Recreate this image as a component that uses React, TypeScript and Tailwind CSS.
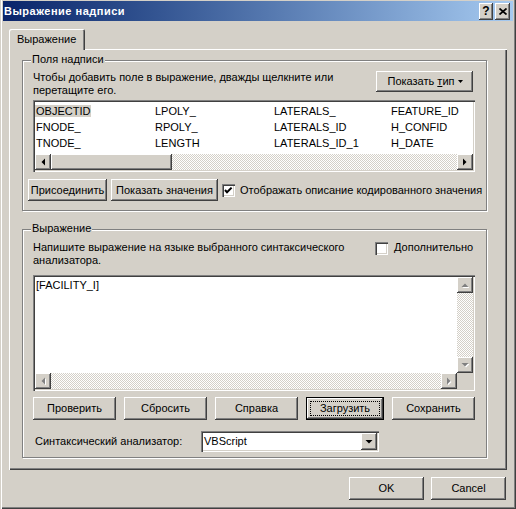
import React from 'react';

const RAISED =
  'bg-[#d4d0c8] shadow-[inset_-1px_-1px_#404040,inset_1px_1px_#fff,inset_-2px_-2px_#808080,inset_2px_2px_#d4d0c8]';
const SUNKEN =
  'shadow-[inset_1px_1px_#808080,inset_2px_2px_#404040,inset_-1px_-1px_#fff,inset_-2px_-2px_#d4d0c8]';
const DITHER =
  'bg-[image:repeating-conic-gradient(#fff_0_25%,#d4d0c8_0_50%)] bg-[length:2px_2px]';
const ETCHED = 'border border-[#808080] shadow-[inset_1px_1px_#fff,1px_1px_#fff]';

type Dir = 'l' | 'r' | 'u' | 'd';

const TRI: Record<Dir, string> = {
  l: '6,0.5 6,7.5 2.5,4',
  r: '2,0.5 2,7.5 5.5,4',
  u: '0.5,6 7.5,6 4,2.5',
  d: '0.5,2 7.5,2 4,5.5',
};

function Tri({ dir, off = false }: { dir: Dir; off?: boolean }) {
  return (
    <svg width="8" height="8" viewBox="0 0 8 8">
      {off && <polygon points={TRI[dir]} fill="#fff" transform="translate(1 1)" />}
      <polygon points={TRI[dir]} fill={off ? '#808080' : '#000'} />
    </svg>
  );
}

function ScrollBtn({ dir, off = false, className = 'w-[16px] h-[16px]' }: { dir: Dir; off?: boolean; className?: string }) {
  return (
    <div className={`${RAISED} shrink-0 flex items-center justify-center ${className}`}>
      <Tri dir={dir} off={off} />
    </div>
  );
}

function Btn({ children, className = '' }: { children: React.ReactNode; className?: string }) {
  return <div className={`${RAISED} shrink-0 flex items-center justify-center ${className}`}>{children}</div>;
}

function Check({ on = false }: { on?: boolean }) {
  return (
    <div className={`w-[13px] h-[13px] bg-white ${SUNKEN} shrink-0 flex items-center justify-center`}>
      {on && (
        <svg width="9" height="9" viewBox="0 0 9 9">
          <polyline points="1,4 3,6.2 7.6,1.6" stroke="#000" strokeWidth="2" fill="none" />
        </svg>
      )}
    </div>
  );
}

const fields = [
  ['OBJECTID', 'LPOLY_', 'LATERALS_', 'FEATURE_ID'],
  ['FNODE_', 'RPOLY_', 'LATERALS_ID', 'H_CONFID'],
  ['TNODE_', 'LENGTH', 'LATERALS_ID_1', 'H_DATE'],
];

export default function App() {
  return (
    <div className="w-[516px] h-[509px] bg-[#d4d0c8] font-['Liberation_Sans',Arial,sans-serif] text-[11px] leading-[13px] text-black pt-[1px] px-[3px] overflow-hidden select-none shadow-[inset_1px_0_#d4d0c8,inset_2px_0_#fff,inset_-1px_-1px_#404040,inset_-2px_-2px_#808080]">
      {/* title bar */}
      <div className="h-[20px] flex items-center bg-linear-to-r from-[#0a246a] to-[#a6caf0] pl-[1px] pr-[3px]">
        <span className="font-bold text-white tracking-[0.5px]">Выражение надписи</span>
        <div className="ml-auto flex gap-[2px]">
          <div className={`${RAISED} w-[14px] h-[17px] flex items-center justify-center font-bold text-[12px]`}>?</div>
          <div className={`${RAISED} w-[15px] h-[17px] flex items-center justify-center`}>
            <svg width="8" height="7" viewBox="0 0 8 7">
              <path d="M0.5 0.5 L7.5 6.5 M7.5 0.5 L0.5 6.5" stroke="#000" strokeWidth="1.7" />
            </svg>
          </div>
        </div>
      </div>

      <div className="pl-[6px] pt-[8px]">
        {/* tab */}
        <div className="relative z-10 w-[76px] h-[21px] -mb-px bg-[#d4d0c8] rounded-t-[2px] pl-[8px] pt-[4px] shadow-[inset_1px_1px_#fff,inset_-1px_0_#404040,inset_-2px_0_#808080]">
          Выражение
        </div>

        {/* tab panel */}
        <div className="w-[498px] h-[421px] pt-[11px] pl-[13px] shadow-[inset_1px_1px_#fff,inset_-1px_-1px_#404040,inset_-2px_-2px_#808080]">
          {/* fields group */}
          <div className={`relative w-[465px] h-[151px] ${ETCHED} pt-[10px] pl-[10px] pr-[11px]`}>
            <span className="absolute left-[8px] -top-[8px] px-px bg-[#d4d0c8]">Поля надписи</span>
            <div className="flex justify-between h-[26px]">
              <div className="whitespace-nowrap">
                Чтобы добавить поле в выражение, дважды щелкните или
                <br />
                перетащите его.
              </div>
              <Btn className="w-[97px] h-[21px] mr-[2px] gap-[4px] pl-[2px]">
                <span>
                  Показать <u>т</u>ип
                </span>
                <svg width="5" height="3" viewBox="0 0 5 3">
                  <polygon points="0,0 5,0 2.5,3" fill="#000" />
                </svg>
              </Btn>
            </div>

            <div className={`mt-[3px] h-[72px] bg-white ${SUNKEN} p-[2px] flex flex-col`}>
              <div className="flex-1 pt-px">
                {fields.map((row, i) => (
                  <div key={i} className="grid grid-cols-[119px_119px_117px_1fr] h-[16px] leading-[16px] whitespace-nowrap">
                    {row.map((f, j) => (
                      <span key={j}>
                        <span className={i === 0 && j === 0 ? 'bg-[#d4d0c8] px-px' : 'px-px'}>{f}</span>
                      </span>
                    ))}
                  </div>
                ))}
              </div>
              <div className="h-[16px] flex shrink-0">
                <ScrollBtn dir="l" />
                <div className={`w-[121px] ${RAISED}`} />
                <div className={`flex-1 ${DITHER}`} />
                <ScrollBtn dir="r" />
              </div>
            </div>

            <div className="flex items-center -ml-[5px] mt-[7px] h-[22px]">
              <Btn className="w-[79px] h-[22px]">Присоединить</Btn>
              <Btn className="w-[107px] h-[22px] ml-[4px]">Показать значения</Btn>
              <div className="ml-[4px]">
                <Check on />
              </div>
              <span className="ml-[5px] whitespace-nowrap shrink-0">Отображать описание кодированного значения</span>
            </div>
          </div>

          {/* expression group */}
          <div className={`relative mt-[18px] w-[465px] h-[229px] ${ETCHED} pt-[11px] pl-[10px] pr-[11px]`}>
            <span className="absolute left-[8px] -top-[8px] px-px bg-[#d4d0c8]">Выражение</span>
            <div className="flex h-[26px]">
              <div className="w-[342px] shrink-0 whitespace-nowrap">
                Напишите выражение на языке выбранного синтаксического
                <br />
                анализатора.
              </div>
              <div className="flex items-start pt-px gap-[6px]">
                <Check />
                <span className="whitespace-nowrap -mt-px">Дополнительно</span>
              </div>
            </div>

            <div className={`mt-[8px] h-[116px] bg-white ${SUNKEN} p-[2px] grid grid-cols-[1fr_16px] grid-rows-[1fr_16px]`}>
              <div className="pl-px pt-[2px]">[FACILITY_I]</div>
              <div className="flex flex-col">
                <ScrollBtn dir="u" off />
                <div className={`flex-1 ${DITHER}`} />
                <ScrollBtn dir="d" off />
              </div>
              <div className="flex">
                <ScrollBtn dir="l" off />
                <div className={`flex-1 ${DITHER}`} />
                <ScrollBtn dir="r" off />
              </div>
              <div className="bg-[#d4d0c8]" />
            </div>

            <div className="flex gap-[8px] mt-[6px]">
              <Btn className="w-[83px] h-[23px]">Проверить</Btn>
              <Btn className="w-[83px] h-[23px]">Сбросить</Btn>
              <Btn className="w-[83px] h-[23px]">Справка</Btn>
              <div className="w-[83px] h-[23px] p-[4px] flex bg-[#d4d0c8] shadow-[inset_0_0_0_1px_#000,inset_-2px_-2px_#404040,inset_2px_2px_#fff,inset_-3px_-3px_#808080]">
                <span className="flex-1 border border-dotted border-black flex items-center justify-center">Загрузить</span>
              </div>
              <Btn className="w-[83px] h-[23px]">Сохранить</Btn>
            </div>

            <div className="flex items-center mt-[11px] h-[21px]">
              <span className="w-[168px] pl-[2px] shrink-0">Синтаксический анализатор:</span>
              <div className={`w-[178px] h-[21px] bg-white ${SUNKEN} p-[2px] flex`}>
                <span className="flex-1 pl-px leading-[17px]">VBScript</span>
                <ScrollBtn dir="d" className="w-[16px] h-[17px]" />
              </div>
            </div>
          </div>
        </div>

        {/* dialog buttons */}
        <div className="w-[497px] flex justify-end gap-[7px] mt-[7px]">
          <Btn className="w-[75px] h-[23px]">OK</Btn>
          <Btn className="w-[75px] h-[23px]">Cancel</Btn>
        </div>
      </div>
    </div>
  );
}
